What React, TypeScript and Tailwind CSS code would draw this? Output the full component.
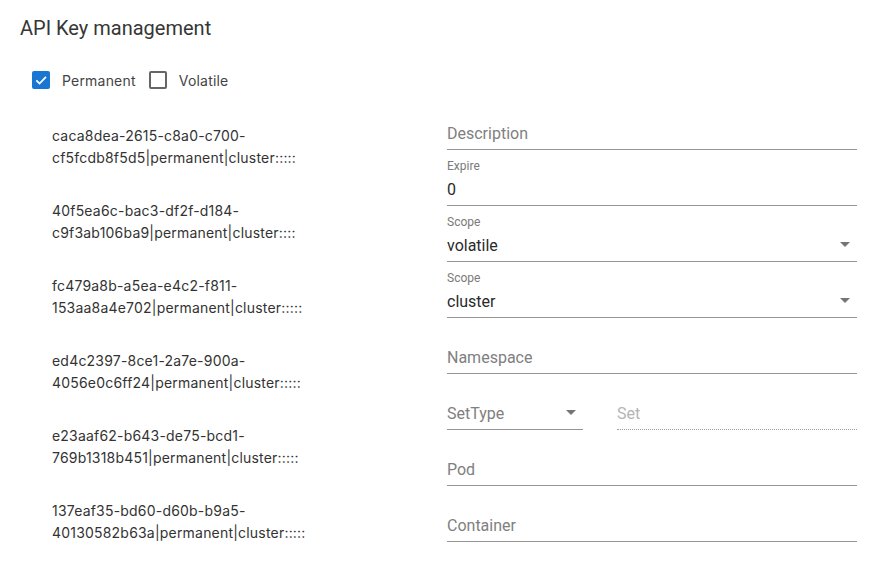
import React from "react";

const keys = [
  ["caca8dea-2615-c8a0-c700-", "cf5fcdb8f5d5|permanent|cluster:::::"],
  ["40f5ea6c-bac3-df2f-d184-", "c9f3ab106ba9|permanent|cluster::::"],
  ["fc479a8b-a5ea-e4c2-f811-", "153aa8a4e702|permanent|cluster:::::"],
  ["ed4c2397-8ce1-2a7e-900a-", "4056e0c6ff24|permanent|cluster:::::"],
  ["e23aaf62-b643-de75-bcd1-", "769b1318b451|permanent|cluster:::::"],
  ["137eaf35-bd60-d60b-b9a5-", "40130582b63a|permanent|cluster:::::"],
];

function Arrow() {
  return (
    <svg width="10" height="5" viewBox="0 0 10 5" className="absolute right-[7px] top-[13px]">
      <path d="M0 0 L10 0 L5 5 Z" fill="rgba(0,0,0,0.54)" />
    </svg>
  );
}

function Field({
  label,
  value,
  placeholder,
  select,
  disabled,
  className = "",
}: {
  label?: string;
  value?: string;
  placeholder?: string;
  select?: boolean;
  disabled?: boolean;
  className?: string;
}) {
  return (
    <div className={"flex h-[56px] flex-col pt-[9px] " + className}>
      <div className="h-[14px] text-[12px] leading-[14px] text-[#7a7a7a]">{label ?? ""}</div>
      <div
        className={
          "relative h-[33px] pt-[7px] text-[16px] leading-[19px] " +
          (disabled
            ? "border-b border-dotted border-[#9e9e9e] text-[#b5b5b5]"
            : "border-b border-[#949494] " + (value ? "text-[#2a2a2a]" : "text-[#808080]"))
        }
      >
        {value ?? placeholder}
        {select && <Arrow />}
      </div>
    </div>
  );
}

const sideFont = { fontFamily: "Inter, 'Noto Sans', sans-serif", letterSpacing: "0.2px" };

export default function App() {
  return (
    <div
      className="min-h-[564px] w-[869px] bg-white pl-[20px] pr-[12px] pt-[14px]"
      style={{ fontFamily: "Roboto, 'Liberation Sans', sans-serif" }}
    >
      <div className="text-[20px] leading-[28px] text-[#363636]">API Key management</div>
      <div
        className="mt-[29px] flex h-[18px] items-center pl-[12px] text-[14px] text-[#444444]"
        style={sideFont}
      >
        <span className="flex h-[18px] w-[18px] items-center justify-center rounded-[2px] bg-[#1976d2]">
          <svg width="14" height="14" viewBox="0 0 24 24">
            <path d="M4 12.5 L9.5 18 L20.5 6.5" fill="none" stroke="white" strokeWidth="3" />
          </svg>
        </span>
        <span className="ml-[12px]">Permanent</span>
        <span className="ml-[13px] h-[18px] w-[18px] rounded-[2px] border-2 border-[#666666]" />
        <span className="ml-[12px]">Volatile</span>
      </div>
      <div className="mt-[5px] flex">
        <div
          className="flex w-[427px] shrink-0 flex-col gap-[31px] pl-[32px] pt-[31px] text-[14px] leading-[22px] text-[#333333]"
          style={sideFont}
        >
          {keys.map((k) => (
            <div key={k[0]}>
              <div>{k[0]}</div>
              <div>{k[1]}</div>
            </div>
          ))}
        </div>
        <div className="flex w-[410px] shrink-0 flex-col">
          <Field placeholder="Description" />
          <Field label="Expire" value="0" />
          <Field label="Scope" value="volatile" select />
          <Field label="Scope" value="cluster" select />
          <Field placeholder="Namespace" />
          <div className="flex gap-[34px]">
            <Field placeholder="SetType" select className="w-[136px]" />
            <Field placeholder="Set" disabled className="flex-1" />
          </div>
          <Field placeholder="Pod" />
          <Field placeholder="Container" />
        </div>
      </div>
    </div>
  );
}
